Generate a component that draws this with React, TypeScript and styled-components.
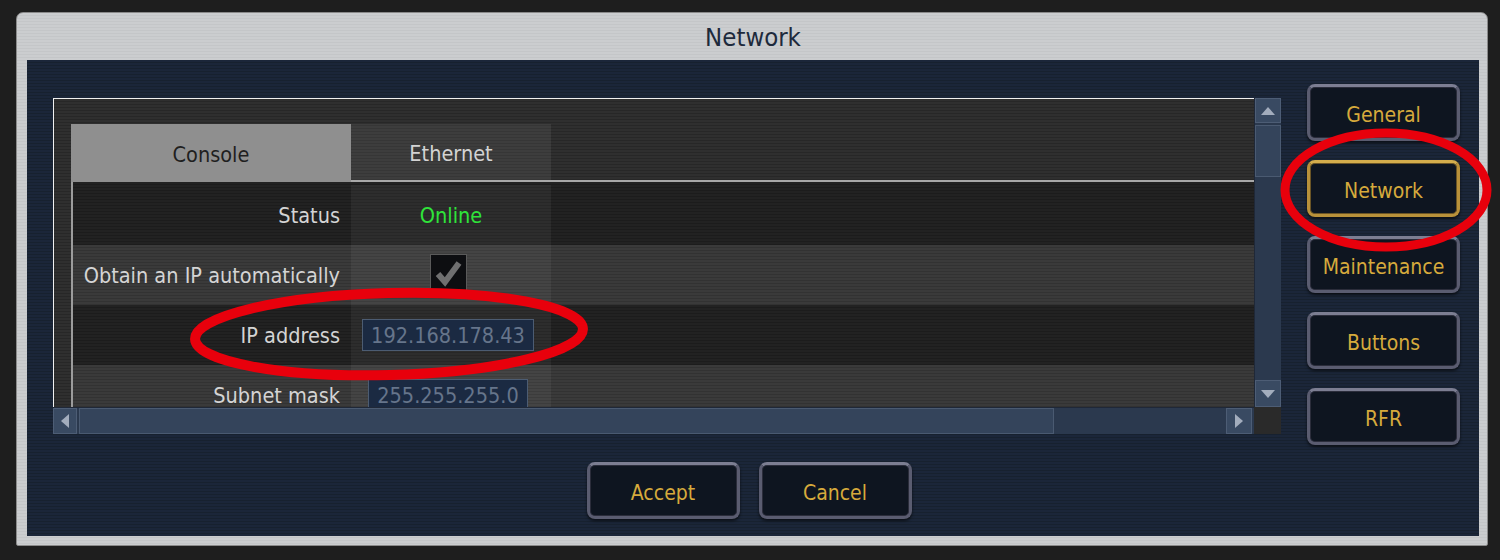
import React from 'react';
import styled, { createGlobalStyle } from 'styled-components';

const FONT = `"DejaVu Sans Condensed", "DejaVu Sans", sans-serif`;

const Global = createGlobalStyle`
  html, body { margin: 0; padding: 0; background: #1e1e1e; }
  body { width: 1500px; height: 560px; overflow: hidden; font-family: ${FONT}; }
  #root { width: 1500px; height: 560px; }
`;

const Page = styled.div`
  position: relative;
  width: 1500px;
  height: 560px;
  box-sizing: border-box;
  padding: 12px 12px 0 16px;
`;

const Window = styled.div`
  width: 1472px;
  height: 534px;
  box-sizing: border-box;
  border: 1px solid #8a8a8a;
  border-radius: 7px 7px 2px 2px;
  background: repeating-linear-gradient(to bottom, #cbcdcf 0 2px, #c4c6c8 2px 3px);
  display: flex;
  flex-direction: column;
  padding: 0 8px 9px 10px;
`;

const Title = styled.div`
  height: 47px;
  line-height: 49px;
  text-align: center;
  font-size: 25.5px;
  color: #1d2a3c;
`;

const Body = styled.div`
  flex: 1;
  background: repeating-linear-gradient(to bottom, #1b2639 0 2px, #17212f 2px 3px);
  padding: 24px 19px 0 26px;
  display: flex;
  flex-direction: column;
`;

const TopRow = styled.div`
  display: flex;
  align-items: flex-start;
  gap: 26px;
`;

const LeftCol = styled.div`
  padding-top: 14px;
`;

const Panel = styled.div`
  display: grid;
  grid-template-columns: 1201px 27px;
  grid-template-rows: 309px 27px;
  width: 1228px;
`;

const Viewport = styled.div`
  box-sizing: border-box;
  border-top: 1px solid #f0f0f0;
  border-left: 1px solid #f0f0f0;
  background: repeating-linear-gradient(to bottom, #2f2f2f 0 2px, #272727 2px 3px);
  padding: 25px 0 0 17px;
  overflow: hidden;
`;

const Table = styled.div`
  display: flex;
  flex-direction: column;
`;

const HeaderRow = styled.div`
  display: flex;
  height: 58px;
`;

const Tab = styled.div<{ $active?: boolean }>`
  width: ${p => (p.$active ? '280px' : '200px')};
  box-sizing: border-box;
  display: flex;
  align-items: center;
  justify-content: center;
  font-size: 21.5px;
  color: ${p => (p.$active ? '#1f1f1f' : '#d3d3d3')};
  background: ${p => (p.$active ? '#8f8f8f' : 'rgba(255,255,255,0.07)')};
  border-bottom: ${p => (p.$active ? 'none' : '2px solid #a8a8a8')};
  padding-top: 3px;
`;

const HeaderFill = styled.div`
  flex: 1;
  border-bottom: 2px solid #a8a8a8;
`;

const Rows = styled.div`
  border-left: 2px solid #9c9c9c;
`;

const Row = styled.div<{ $light?: boolean }>`
  display: flex;
  height: 60px;
  box-sizing: border-box;
  background: ${p =>
    p.$light
      ? 'repeating-linear-gradient(to bottom, #3a3a3a 0 2px, #323232 2px 3px)'
      : 'repeating-linear-gradient(to bottom, #222222 0 2px, #1c1c1c 2px 3px)'};
  &:first-child {
    height: 63px;
    padding-top: 3px;
  }
`;

const Label = styled.div`
  width: 278px;
  box-sizing: border-box;
  padding-right: 11px;
  display: flex;
  align-items: center;
  justify-content: flex-end;
  font-size: 21.5px;
  color: #d4d4d4;
  white-space: nowrap;
`;

const Value = styled.div`
  width: 200px;
  display: flex;
  align-items: center;
  justify-content: center;
  background: rgba(255, 255, 255, 0.05);
  padding-right: 6px;
  box-sizing: border-box;
`;

const Online = styled.span`
  color: #2fe43a;
  font-size: 21.5px;
  padding-left: 6px;
`;

const CheckBox = styled.div`
  width: 37px;
  height: 38px;
  box-sizing: border-box;
  background: #0d0e11;
  border: 1px solid #5a5a5a;
  display: flex;
  align-items: center;
  justify-content: center;
  margin-top: -4px;
`;

const Field = styled.div`
  box-sizing: border-box;
  height: 32px;
  padding: 0 8px;
  display: flex;
  align-items: center;
  background: #1b2a42;
  border: 1px solid #4c5c72;
  color: #66758b;
  font-size: 21.5px;
`;

const ScrollBtn = styled.div<{ $w: number; $h: number }>`
  width: ${p => p.$w}px;
  height: ${p => p.$h}px;
  box-sizing: border-box;
  flex: none;
  background: #394a62;
  border: 1px solid #4d5d75;
  display: flex;
  align-items: center;
  justify-content: center;
`;

const VScroll = styled.div`
  background: #2b394e;
  display: flex;
  flex-direction: column;
  border-left: 1px solid #1f2838;
`;

const VThumb = styled.div`
  margin-top: 2px;
  height: 52px;
  background: #34445b;
  border: 1px solid #4a5a71;
  box-sizing: border-box;
`;

const Spacer = styled.div`
  flex: 1;
`;

const HScroll = styled.div`
  background: #2b394e;
  display: flex;
  align-items: stretch;
  border-top: 1px solid #1f2838;
  padding-right: 2px;
`;

const HThumb = styled.div`
  margin-left: 2px;
  width: 975px;
  background: #34445b;
  border: 1px solid #4a5a71;
  box-sizing: border-box;
`;

const Corner = styled.div`
  background: #2a2a2a;
`;

const SideCol = styled.div`
  display: flex;
  flex-direction: column;
  gap: 19px;
  width: 153px;
`;

const Btn = styled.div<{ $active?: boolean }>`
  width: 153px;
  height: 57px;
  box-sizing: border-box;
  border-radius: 8px;
  background: #0e1520;
  border: 3px solid ${p => (p.$active ? '#b8913a' : '#5a5c70')};
  border-top-color: ${p => (p.$active ? '#d4ad4c' : '#7c7e92')};
  box-shadow: 0 2px 3px rgba(0, 0, 0, 0.6), inset 0 0 0 1px ${p => (p.$active ? '#6b5526' : '#2b2d3b')};
  display: flex;
  align-items: center;
  justify-content: center;
  color: #d6aa3c;
  font-size: 21px;
  padding-top: 5px;
`;

const Footer = styled.div`
  display: flex;
  justify-content: center;
  gap: 19px;
  margin-top: 17px;
  padding-right: 15px;
`;

const Overlay = styled.svg`
  position: absolute;
  left: 0;
  top: 0;
  pointer-events: none;
`;

const Tri = ({ dir }: { dir: 'up' | 'down' | 'left' | 'right' }) => {
  const pts = {
    up: '1,11 8,3 15,11',
    down: '1,3 8,11 15,3',
    left: '11,1 3,8 11,15',
    right: '3,1 11,8 3,15',
  }[dir];
  const vertical = dir === 'up' || dir === 'down';
  return (
    <svg width={vertical ? 16 : 14} height={vertical ? 14 : 16} viewBox={vertical ? '0 0 16 14' : '0 0 14 16'}>
      <polygon points={pts} fill="#a3adbd" />
    </svg>
  );
};

const rows: { label: string; light: boolean; kind: 'online' | 'check' | 'ip' | 'mask' }[] = [
  { label: 'Status', light: false, kind: 'online' },
  { label: 'Obtain an IP automatically', light: true, kind: 'check' },
  { label: 'IP address', light: false, kind: 'ip' },
  { label: 'Subnet mask', light: true, kind: 'mask' },
];

export default function App() {
  return (
    <>
      <Global />
      <Page>
        <Window>
          <Title>Network</Title>
          <Body>
            <TopRow>
              <LeftCol>
                <Panel>
                  <Viewport>
                    <Table>
                      <HeaderRow>
                        <Tab $active>Console</Tab>
                        <Tab>Ethernet</Tab>
                        <HeaderFill />
                      </HeaderRow>
                      <Rows>
                        {rows.map(r => (
                          <Row key={r.label} $light={r.light}>
                            <Label>{r.label}</Label>
                            <Value>
                              {r.kind === 'online' && <Online>Online</Online>}
                              {r.kind === 'check' && (
                                <CheckBox>
                                  <svg width="30" height="30" viewBox="0 0 30 30">
                                    <path d="M5 16 L12 24 L26 5" fill="none" stroke="#6f6f70" strokeWidth="6" strokeLinejoin="miter" />
                                  </svg>
                                </CheckBox>
                              )}
                              {r.kind === 'ip' && <Field>192.168.178.43</Field>}
                              {r.kind === 'mask' && <Field>255.255.255.0</Field>}
                            </Value>
                          </Row>
                        ))}
                      </Rows>
                    </Table>
                  </Viewport>
                  <VScroll>
                    <ScrollBtn $w={26} $h={25}><Tri dir="up" /></ScrollBtn>
                    <VThumb />
                    <Spacer />
                    <ScrollBtn $w={26} $h={27}><Tri dir="down" /></ScrollBtn>
                  </VScroll>
                  <HScroll>
                    <ScrollBtn $w={24} $h={26}><Tri dir="left" /></ScrollBtn>
                    <HThumb />
                    <Spacer />
                    <ScrollBtn $w={26} $h={26}><Tri dir="right" /></ScrollBtn>
                  </HScroll>
                  <Corner />
                </Panel>
              </LeftCol>
              <SideCol>
                <Btn>General</Btn>
                <Btn $active>Network</Btn>
                <Btn>Maintenance</Btn>
                <Btn>Buttons</Btn>
                <Btn>RFR</Btn>
              </SideCol>
            </TopRow>
            <Footer>
              <Btn>Accept</Btn>
              <Btn>Cancel</Btn>
            </Footer>
          </Body>
        </Window>
        <Overlay width="1500" height="560" viewBox="0 0 1500 560">
          <ellipse cx="1386" cy="190" rx="101" ry="57" fill="none" stroke="#e8000c" strokeWidth="9" />
          <ellipse cx="389" cy="334" rx="194" ry="41" fill="none" stroke="#e8000c" strokeWidth="10" transform="rotate(-1.5 389 334)" />
        </Overlay>
      </Page>
    </>
  );
}
